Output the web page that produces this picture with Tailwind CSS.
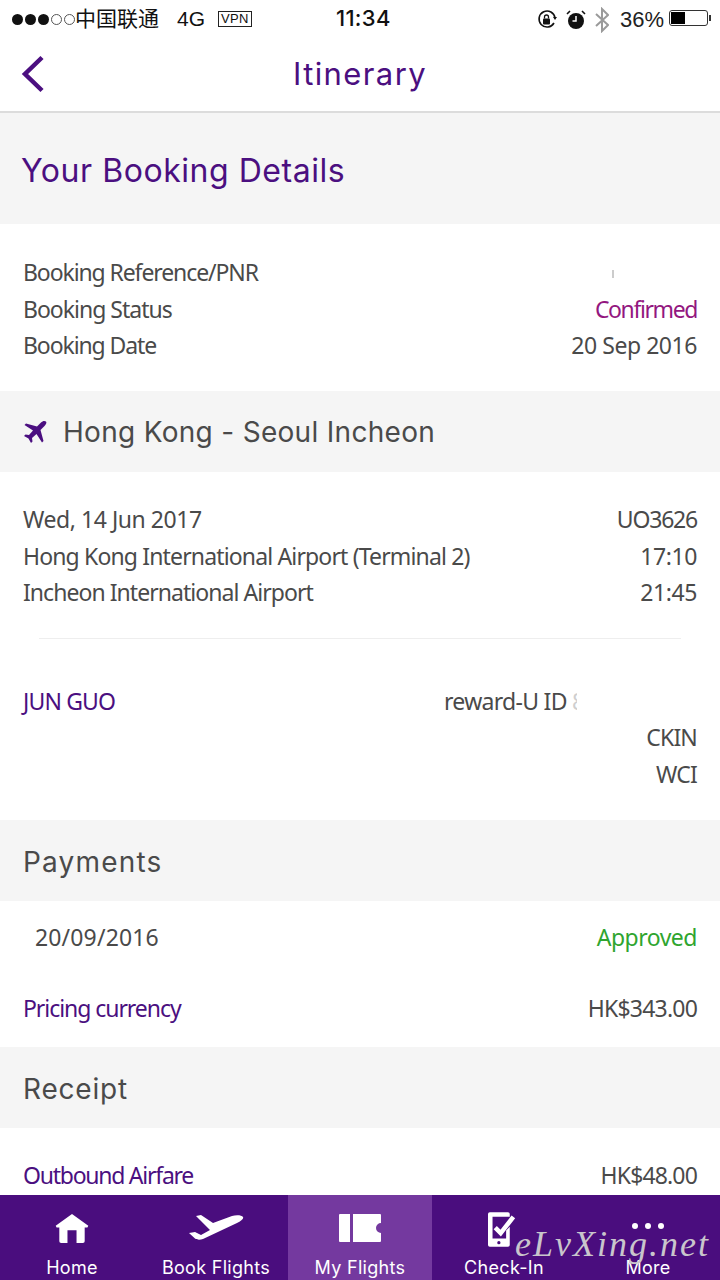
<!DOCTYPE html>
<html lang="en">
<head>
  <meta charset="UTF-8" />
  <title>Itinerary</title>
  <script src="https://cdn.jsdelivr.net/npm/@tailwindcss/browser@4"></script>
</head>
<body class="bg-white">
  <div class="relative w-[720px] h-[1280px] overflow-hidden flex flex-col font-['Noto_Sans',sans-serif] text-[23px] text-[#4a4a4a] tracking-[-0.85px]">

    <!-- Status bar -->
    <div class="h-[38px] shrink-0 flex items-center px-[12px] text-[#111] relative font-['Liberation_Sans','Noto_Sans_CJK_SC',sans-serif] text-[21px] tracking-normal">
      <div class="flex items-center gap-[2px]">
        <span class="w-[11px] h-[11px] rounded-full bg-[#111]"></span>
        <span class="w-[11px] h-[11px] rounded-full bg-[#111]"></span>
        <span class="w-[11px] h-[11px] rounded-full bg-[#111]"></span>
        <span class="w-[11px] h-[11px] rounded-full border border-[#555]"></span>
        <span class="w-[11px] h-[11px] rounded-full border border-[#555]"></span>
      </div>
      <span class="text-[21px]">中国联通</span>
      <span class="ml-[18px] text-[21px]">4G</span>
      <span class="ml-[13px] border border-[#222] text-[13px] leading-[13px] px-[2px] h-[16px] tracking-[0.3px]">VPN</span>
      <span class="absolute left-[336px] top-[2px] font-medium text-[22px] tracking-[0.3px] font-['Inter',sans-serif]">11:34</span>
      <div class="absolute left-[536px] top-[3px] flex items-center">
        <svg width="22" height="22" viewBox="0 0 22 22" fill="none"><path d="M18 14a8 8 0 1 1 1-5" stroke="#111" stroke-width="1.6"/><path d="M17 8h4l-2 3z" fill="#111"/><rect x="7" y="9.500" width="7" height="6" rx="1" fill="#111"/><path d="M8.500 9.500V8a2 2 0 0 1 4 0v1.500" stroke="#111" stroke-width="1.300"/></svg>
        <svg class="ml-[8px]" width="20" height="20" viewBox="0 0 20 20"><circle cx="10" cy="11" r="8" fill="#111"/><path d="M10 6v5H6.500" stroke="#fff" stroke-width="1.500" fill="none"/><path d="M1 4l3-3M19 4l-3-3" stroke="#111" stroke-width="1.600"/></svg>
        <svg class="ml-[9px]" width="14" height="26" viewBox="0 0 14 26" fill="none"><path d="M1 7l12 11-6 6V2l6 6L1 19" stroke="#9a9a9a" stroke-width="2"/></svg>
        <span class="ml-[11px] text-[22px] text-[#222]">36%</span>
      </div>
      <div class="absolute left-[669px] top-[10px] flex items-center">
        <div class="w-[39px] h-[16px] border border-[#333] rounded-[3px] p-[1px] bg-white"><div class="w-[14px] h-full bg-black"></div></div>
        <div class="w-[2px] h-[6px] bg-[#333] ml-[1px]"></div>
      </div>
    </div>

    <!-- Nav header -->
    <div class="h-[75px] shrink-0 relative flex items-center justify-center border-b-2 border-[#dcdcdc] font-['Inter',sans-serif] text-[#4b0f80]">
      <svg class="absolute left-[21px] top-[17px]" width="24" height="38" viewBox="0 0 24 38" fill="none"><path d="M21 2.500 4 19l17 16.500" stroke="#4b0f80" stroke-width="4.500"/></svg>
      <span class="text-[31px] tracking-[1.400px] font-normal">Itinerary</span>
    </div>

    <!-- Your Booking Details -->
    <div class="h-[111px] shrink-0 bg-[#f5f5f5] flex items-center px-[21px] pt-[5px] font-['Inter',sans-serif] text-[32px] text-[#4b0f80] tracking-[0.550px]">Your Booking Details</div>

    <div class="h-[167px] shrink-0 px-[23px] pt-[30px] leading-[36.500px]">
      <div class="flex justify-between"><span class="tracking-[-1.100px]">Booking Reference/PNR</span></div>
      <div class="flex justify-between"><span class="tracking-[-1px]">Booking Status</span><span class="text-[#93177f] tracking-[-1.400px]">Confirmed</span></div>
      <div class="flex justify-between"><span class="tracking-[-1.100px]">Booking Date</span><span class="tracking-[-0.450px]">20 Sep 2016</span></div>
    </div>

    <!-- Route -->
    <div class="h-[81px] shrink-0 bg-[#f5f5f5] flex items-center px-[23px] font-['Inter',sans-serif] text-[28px] text-[#4a4a4a] tracking-[0.300px]">
      <svg width="24" height="24" viewBox="0 0 24 24" class="mr-[16px]"><path d="M23 1.500c-1.500-1-3.500-.5-5 1l-4 4L3 3.500 1.500 5l8.500 5.500-4 4.500-3.500-.5L1 16l4.500 2.500L8 23l1.500-1.500-.5-3.500 4.500-4L19 22.500l1.500-1.500-3-11 4-4c1.500-1.500 2.500-3.500 1.500-4.500z" fill="#4b0f80"/></svg>
      <span>Hong Kong - Seoul Incheon</span>
    </div>

    <div class="h-[348px] shrink-0 px-[23px] pt-[29px] leading-[36.500px]">
      <div class="flex justify-between"><span class="tracking-[-0.450px]">Wed, 14 Jun 2017</span><span class="tracking-[-1.200px]">UO3626</span></div>
      <div class="flex justify-between"><span>Hong Kong International Airport (Terminal 2)</span><span class="tracking-[-0.400px]">17:10</span></div>
      <div class="flex justify-between"><span class="tracking-[-0.950px]">Incheon International Airport</span><span class="tracking-[-0.400px]">21:45</span></div>
      <div class="h-px bg-[#eeeeee] mx-[16px] mt-[27px] mb-[44px]"></div>
      <div class="flex relative">
        <span class="text-[#4b0f80]">JUN GUO</span>
        <span class="absolute left-[421px] flex tracking-[-0.700px]">reward-U ID&nbsp;<span class="inline-block w-[5px] overflow-hidden text-[#cfcfcf]">8</span></span>
      </div>
      <div class="text-right">CKIN</div>
      <div class="text-right">WCI</div>
    </div>

    <!-- Payments -->
    <div class="h-[81px] shrink-0 bg-[#f5f5f5] flex items-center px-[23px] pt-[3px] font-['Inter',sans-serif] text-[28px] tracking-[1.200px]">Payments</div>
    <div class="h-[146px] shrink-0 px-[23px] pt-[18px]">
      <div class="flex justify-between pl-[12px] leading-[36px]"><span class="tracking-[0.150px]">20/09/2016</span><span class="text-[#2fa52f] tracking-[-0.500px]">Approved</span></div>
      <div class="flex justify-between leading-[36px] mt-[35px]"><span class="text-[#4b0f80] tracking-[-1.050px]">Pricing currency</span><span class="tracking-[-0.800px]">HK$343.00</span></div>
    </div>

    <!-- Receipt -->
    <div class="h-[81px] shrink-0 bg-[#f5f5f5] flex items-center px-[23px] pt-[2px] font-['Inter',sans-serif] text-[28px] tracking-[0.800px]">Receipt</div>
    <div class="h-[67px] shrink-0 px-[23px] pt-[29px]">
      <div class="flex justify-between leading-[36px]"><span class="text-[#4b0f80] tracking-[-1.250px]">Outbound Airfare</span><span>HK$48.00</span></div>
    </div>

    <!-- Tab bar -->
    <div class="h-[85px] shrink-0 bg-[#4a0d7e] grid grid-cols-5 text-white font-['Inter',sans-serif] text-[18px] tracking-[0.300px] leading-[24px]">
      <div class="flex flex-col items-center justify-end">
        <svg width="36" height="29" viewBox="0 0 36 32" class="mb-[13px]"><path d="M18 0 0 13l1 2h3v15a2 2 0 0 0 2 2h7V18h10v14h7a2 2 0 0 0 2-2V15h3l1-2z" fill="#fff"/></svg>
        <span>Home</span>
      </div>
      <div class="flex flex-col items-center justify-end">
        <svg width="56" height="28" viewBox="0 0 56 28" class="mb-[13px]"><path d="M8 1l5-1 12 8 19-7c4-1.500 10-1 11 1s-2 4-6 6L15 24c-3 1-6 1-8-.5L1 18l6-1 6 3 9-5z" fill="#fff"/></svg>
        <span class="whitespace-nowrap">Book Flights</span>
      </div>
      <div class="flex flex-col items-center justify-end bg-[#74399f]">
        <svg width="42" height="28" viewBox="0 0 42 28" class="mb-[14px]"><path d="M0 1a1 1 0 0 1 1-1h10v28H1a1 1 0 0 1-1-1zM14 0h27a1 1 0 0 1 1 1v8a5 5 0 0 0 0 10v8a1 1 0 0 1-1 1H14z" fill="#fff"/></svg>
        <span class="whitespace-nowrap">My Flights</span>
      </div>
      <div class="flex flex-col items-center justify-end">
        <svg width="29" height="37" viewBox="0 0 32 38" class="mb-[8px] ml-[-3px]"><path d="M2 0h20a2 2 0 0 1 2 2v3H5v24h15V20l4-4v20a2 2 0 0 1-2 2H2a2 2 0 0 1-2-2V2a2 2 0 0 1 2-2z" fill="#fff"/><path d="M8 17l6 6L28 5" stroke="#fff" stroke-width="5" fill="none"/><circle cx="12" cy="33.500" r="1.800" fill="#4a0d7e"/></svg>
        <span>Check-In</span>
      </div>
      <div class="flex flex-col items-center justify-end">
        <div class="flex gap-[7px] mb-[27px]">
          <span class="w-[6px] h-[6px] rounded-full bg-white"></span>
          <span class="w-[6px] h-[6px] rounded-full bg-white"></span>
          <span class="w-[6px] h-[6px] rounded-full bg-white"></span>
        </div>
        <span>More</span>
      </div>
    </div>

    <!-- Watermark -->
    <div class="absolute left-[515px] top-[1226px] font-['Liberation_Serif',serif] italic text-[36px] text-[#c9c5cc] tracking-[2px] leading-none">eLvXing.net</div>

    <!-- Blurred PNR -->
    <div class="absolute left-[612px] top-[270px] w-[2px] h-[8px] bg-[#aaaaaa]/60"></div>
  </div>
</body>
</html>
